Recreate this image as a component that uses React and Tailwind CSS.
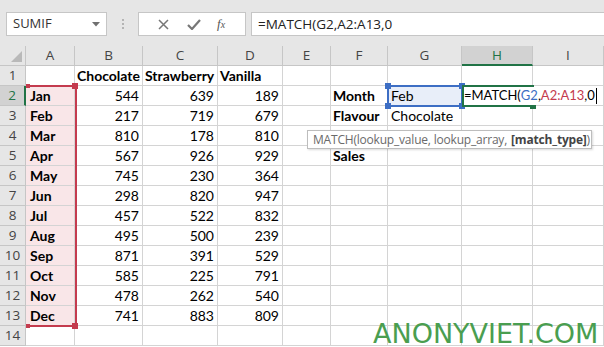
import React from "react";

const cols = ["A", "B", "C", "D", "E", "F", "G", "H", "I"];
const months = ["Jan","Feb","Mar","Apr","May","Jun","Jul","Aug","Sep","Oct","Nov","Dec"];
const choc = [544,217,810,567,745,298,457,495,871,585,478,741];
const straw = [639,719,178,926,230,820,522,500,391,225,262,883];
const van = [189,679,810,929,364,947,832,239,529,791,540,809];

const cellFont = { fontFamily: "Lato, 'Open Sans', sans-serif" };

function Cell({ children, className = "" }) {
  return (
    <div className={"h-[20px] border-r border-b border-[#d4d4d4] flex items-center overflow-visible whitespace-nowrap text-[14px] text-black " + className}>
      {children}
    </div>
  );
}

function rowContent(r) {
  const cells = [];
  const i = r - 2;
  const isData = r >= 2 && r <= 13;
  cells.push(
    <Cell key="A" className={isData ? "bg-[#f9e6e8] font-bold pl-[4px]" : ""}>
      {isData ? months[i] : ""}
    </Cell>
  );
  if (r === 1) {
    cells.push(<Cell key="B" className="font-bold pl-[2px]">Chocolate</Cell>);
    cells.push(<Cell key="C" className="font-bold pl-[2px]">Strawberry</Cell>);
    cells.push(<Cell key="D" className="font-bold pl-[2px]">Vanilla</Cell>);
  } else if (isData) {
    cells.push(<Cell key="B" className="justify-end pr-[3px]">{choc[i]}</Cell>);
    cells.push(<Cell key="C" className="justify-end pr-[3px]">{straw[i]}</Cell>);
    cells.push(<Cell key="D" className="justify-end pr-[3px]">{van[i]}</Cell>);
  } else {
    cells.push(<Cell key="B" />);
    cells.push(<Cell key="C" />);
    cells.push(<Cell key="D" />);
  }
  cells.push(<Cell key="E" />);
  const fLabel = { 2: "Month", 3: "Flavour", 5: "Sales" }[r];
  cells.push(<Cell key="F" className="font-bold pl-[2px]">{fLabel || ""}</Cell>);
  let g = "";
  if (r === 2) g = "Feb";
  if (r === 3) g = "Chocolate";
  cells.push(<Cell key="G" className={(r === 2 ? "bg-[#e8eef9] " : "") + "pl-[3px]"}>{g}</Cell>);
  cells.push(<Cell key="H" className={r === 2 ? "border-r-0" : ""} />);
  cells.push(<Cell key="I" />);
  return cells;
}

export default function App() {
  return (
    <div className="w-[604px] h-[347px] overflow-hidden bg-white relative" style={{ fontFamily: "'Open Sans', 'Noto Sans', sans-serif" }}>
      {/* Formula bar area */}
      <div className="h-[46px] bg-[#e6e6e6] flex items-start pt-[12px]">
        <div className="ml-[6px] w-[101px] h-[24px] bg-white border border-[#c6c6c6] flex items-center pl-[6px] pr-[6px] justify-between">
          <span className="text-[13px] text-[#333]">SUMIF</span>
          <svg width="8" height="5" viewBox="0 0 8 5"><path d="M0 0 L8 0 L4 4.5 Z" fill="#707070" /></svg>
        </div>
        <div className="ml-[15px] mt-[7px] flex flex-col gap-[2px]">
          <div className="w-[2px] h-[2px] bg-[#b4b4b4]" />
          <div className="w-[2px] h-[2px] bg-[#b4b4b4]" />
          <div className="w-[2px] h-[2px] bg-[#b4b4b4]" />
        </div>
        <div className="ml-[14px] w-[108px] h-[24px] bg-white border border-[#c6c6c6] flex items-center">
          <svg className="ml-[19px]" width="11" height="11" viewBox="0 0 11 11">
            <path d="M1 1 L10 10 M10 1 L1 10" stroke="#777" strokeWidth="1.5" />
          </svg>
          <svg className="ml-[18px]" width="14" height="11" viewBox="0 0 14 11">
            <path d="M1 6 L5 10 L13 1" stroke="#777" strokeWidth="2.2" fill="none" />
          </svg>
          <span className="ml-[16px] text-[13px] italic text-[#555]" style={{ fontFamily: "'Liberation Serif', serif" }}>
            f<span className="text-[10px]">x</span>
          </span>
        </div>
        <div className="ml-[5px] flex-1 h-[24px] bg-white border border-[#c6c6c6] border-r-0 flex items-center pl-[6px]">
          <span className="text-[13.5px] text-[#222]">=MATCH(G2,A2:A13,0</span>
        </div>
      </div>

      {/* Sheet */}
      <div className="relative">
        <div className="grid grid-cols-[26px_49px_68px_75px_65px_48px_57px_74px_71px_71px] text-[14px]" style={cellFont}>
          <div className="h-[20px] bg-[#e6e6e6] border-r border-b border-[#c6c6c6] relative">
            <svg className="absolute right-[3px] bottom-[3px]" width="11" height="11" viewBox="0 0 11 11">
              <path d="M11 0 L11 11 L0 11 Z" fill="#b9b9b9" />
            </svg>
          </div>
          {cols.map((c) => (
            <div
              key={c}
              className={
                "h-[20px] flex items-center justify-center border-r border-[#c6c6c6] text-[14px] " +
                (c === "H"
                  ? "bg-[#d2d2d2] text-[#217346] border-b-2 border-b-[#217346]"
                  : "bg-[#e6e6e6] text-[#444] border-b border-b-[#c6c6c6]")
              }
              style={{ fontFamily: "'Open Sans', sans-serif", fontSize: "13.5px" }}
            >
              {c}
            </div>
          ))}
          {Array.from({ length: 14 }, (_, k) => k + 1).map((r) => (
            <React.Fragment key={r}>
              <div
                className={
                  "h-[20px] flex items-center justify-center border-b border-[#c6c6c6] " +
                  (r === 2
                    ? "bg-[#d2d2d2] text-[#217346] border-r-2 border-r-[#217346]"
                    : "bg-[#e6e6e6] text-[#444] border-r border-r-[#c6c6c6]")
                }
                style={{ fontFamily: "'Open Sans', sans-serif", fontSize: "13.5px" }}
              >
                {r}
              </div>
              {rowContent(r)}
            </React.Fragment>
          ))}
        </div>

        {/* A2:A13 range highlight */}
        <div className="absolute left-[26px] top-[39px] w-[51px] h-[242px] border-t-2 border-r-2 border-b-2 border-[#c43b4e] pointer-events-none" />
        <div className="absolute left-[26px] top-[38px] w-[4px] h-[4px] bg-[#c43b4e]" />
        <div className="absolute left-[72px] top-[37px] w-[6px] h-[6px] bg-[#c43b4e]" />
        <div className="absolute left-[26px] top-[278px] w-[4px] h-[4px] bg-[#c43b4e]" />
        <div className="absolute left-[72px] top-[277px] w-[6px] h-[6px] bg-[#c43b4e]" />

        {/* G2 reference highlight */}
        <div className="absolute left-[387px] top-[39px] w-[76px] h-[22px] border-2 border-[#3d6ec4]" />
        <div className="absolute left-[385px] top-[37px] w-[6px] h-[6px] bg-[#3d6ec4]" />
        <div className="absolute left-[459px] top-[37px] w-[6px] h-[6px] bg-[#3d6ec4]" />
        <div className="absolute left-[385px] top-[57px] w-[6px] h-[6px] bg-[#3d6ec4]" />
        <div className="absolute left-[459px] top-[57px] w-[6px] h-[6px] bg-[#3d6ec4]" />

        {/* H2 active cell in edit mode */}
        <div className="absolute left-[462px] top-[39px] w-[72px] h-[22px] border-t-2 border-l-2 border-b-2 border-[#217346]" />
        <div className="absolute left-[530px] top-[57px] w-[6px] h-[6px] bg-[#217346]" />
        <div className="absolute left-[464px] top-[41px] h-[18px] flex items-center bg-white pr-[1px] whitespace-nowrap text-[13px] text-black" style={cellFont}>
          <span>=MATCH(</span>
          <span className="text-[#3d6ec4]">G2</span>
          <span>,</span>
          <span className="text-[#c43b4e]">A2:A13</span>
          <span>,0</span>
          <span className="ml-[1px] w-[1px] h-[16px] bg-black" />
        </div>

        {/* Function tooltip */}
        <div
          className="absolute left-[307px] top-[84px] w-[285px] h-[19px] bg-white border border-[#bdbdbd] shadow-[1px_1px_2px_rgba(0,0,0,0.15)] flex items-center px-[5px] whitespace-nowrap text-[12px] text-[#6a6a6a] tracking-[-0.2px]"
          style={{ fontFamily: "'Open Sans', sans-serif" }}
        >
          MATCH(lookup_value, lookup_array,<span className="font-bold text-[#444] ml-[4px]">[match_type]</span>)
        </div>

        {/* Watermark */}
        <div
          className="absolute left-[373px] top-[276px] h-[24px] text-[27px] leading-[24px] text-[#4a9e50] whitespace-nowrap"
          style={{ fontFamily: "'DejaVu Sans', sans-serif" }}
        >
          ANONYVIET.COM
        </div>
      </div>
    </div>
  );
}
